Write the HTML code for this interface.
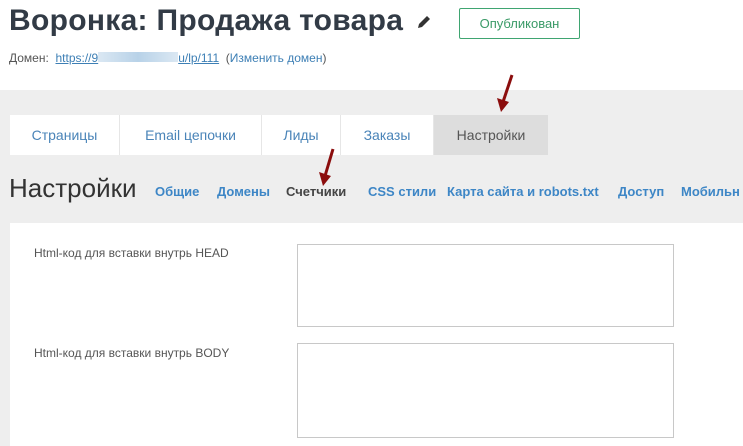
<!DOCTYPE html>
<html><head><meta charset="utf-8"><style>
body{margin:0;width:743px;height:446px;overflow:hidden;font-family:"Liberation Sans","DejaVu Sans",sans-serif;background:#fff;position:relative}
.a{position:absolute}
h1{position:absolute;left:9px;top:4px;margin:0;font-size:30px;font-weight:bold;color:#323b46;letter-spacing:0.3px}
.pub{left:459px;top:8px;width:121px;height:31px;border:1px solid #3fa571;border-radius:2px;color:#3a9a67;font-size:13px;text-align:center;line-height:29px;box-sizing:border-box}
.dom{left:9px;top:51px;font-size:12px;color:#555}
.dom a{color:#3d7fb5;text-decoration:underline}
.gray{left:0;top:90px;width:743px;height:356px;background:#eeeeee}
.tabs{left:10px;top:115px;height:40px;display:flex;background:#fff}
.tabs div{height:40px;line-height:40px;font-size:14px;color:#4a84b8;text-align:center;border-right:1px solid #e6e6e6;box-sizing:border-box}
.h2{left:9px;top:173px;font-size:26px;color:#333}
.sub{top:184px;font-size:13px;font-weight:bold;color:#3d86c6;font-family:"Liberation Sans Narrow","Liberation Sans",sans-serif}
.panel{left:10px;top:223px;width:733px;height:223px;background:#fff}
.lbl{left:34px;font-size:12px;color:#555}
.ta{left:297px;width:377px;border:1px solid #c8c8c8;box-sizing:border-box;background:#fff}
</style></head><body>
<h1>Воронка: Продажа товара</h1>
<svg class="a" style="left:416px;top:14px" width="16" height="16" viewBox="0 0 16 16"><path d="M2 14 L3 10 L11 2 L14 5 L6 13 Z" fill="#333"/></svg>
<div class="a pub">Опубликован</div>
<div class="a dom">Домен:&nbsp;&nbsp;<a>https://9<span style="display:inline-block;width:80px;height:10px;background:linear-gradient(90deg,#dbe8f3,#b8d2e8,#dbe8f3)"></span>u/lp/111</a>&nbsp;&nbsp;(<span style="color:#3d7fb5">Изменить домен</span>)</div>
<div class="a gray"></div>
<div class="a tabs">
<div style="width:110px">Страницы</div>
<div style="width:142px">Email цепочки</div>
<div style="width:79px">Лиды</div>
<div style="width:93px">Заказы</div>
<div style="width:114px;background:#dddddd;color:#555;border:none">Настройки</div>
</div>
<svg class="a" style="left:490px;top:72px" width="30" height="42" viewBox="0 0 30 42"><path d="M22 3 L13 30" stroke="#8b0d0d" stroke-width="3"/><path d="M7 26 L11 40 L19 30 Z" fill="#8b0d0d"/></svg>
<svg class="a" style="left:312px;top:146px" width="30" height="42" viewBox="0 0 30 42"><path d="M21 3 L13 30" stroke="#8b0d0d" stroke-width="3"/><path d="M7 26 L11 40 L19 30 Z" fill="#8b0d0d"/></svg>
<div class="a h2">Настройки</div>
<div class="a sub" style="left:155px">Общие</div>
<div class="a sub" style="left:217px">Домены</div>
<div class="a sub" style="left:286px;color:#444">Счетчики</div>
<div class="a sub" style="left:368px">CSS стили</div>
<div class="a sub" style="left:447px">Карта сайта и robots.txt</div>
<div class="a sub" style="left:618px">Доступ</div>
<div class="a sub" style="left:681px;white-space:nowrap">Мобильн</div>
<div class="a panel"></div>
<div class="a lbl" style="top:246px">Html-код для вставки внутрь HEAD</div>
<div class="a lbl" style="top:346px">Html-код для вставки внутрь BODY</div>
<div class="a ta" style="top:244px;height:83px"></div>
<div class="a ta" style="top:343px;height:95px"></div>
</body></html>
